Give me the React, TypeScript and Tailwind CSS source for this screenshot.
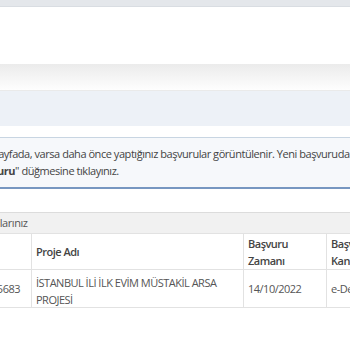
export default function App() {
  return (
    <div
      className="w-[350px] h-[350px] overflow-hidden bg-white text-[#555]"
      style={{ fontFamily: '"Open Sans", "Noto Sans", sans-serif' }}
    >
      <div className="h-[7px] bg-[#e4e7eb] border-b border-[#d9dde2]" />
      <div className="h-[57px] bg-white" />
      <div className="h-[27px] bg-gradient-to-b from-[#ebebeb] to-[#fefefe] border-b border-[#eaeaea]" />
      <div className="h-[35px] bg-[#edf1f7]" />
      <div className="h-[11px]" />

      <div className="h-[52px] border-t border-[#c8d5e2] border-b-2 border-b-[#7797c1] bg-[#f6f8fb] pt-[7px] text-[11px] leading-[17px] tracking-[-0.45px] text-[#444] whitespace-nowrap">
        <div className="-ml-[22px]">
          Bu sayfada, varsa daha önce yaptığınız başvurular görüntülenir. Yeni başvuruda bulunmak için <b>"Yeni</b>
        </div>
        <div className="-ml-[27px]">
          <b>Başvuru</b>" düğmesine tıklayınız.
        </div>
      </div>

      <div className="h-[23px]" />

      <div className="border-t border-[#dcdcdc] bg-[#f1f1f1] h-[21px] flex items-center text-[11px] tracking-[-0.45px] text-[#555] whitespace-nowrap">
        <span className="-ml-[39px]">Başvurularınız</span>
      </div>

      <div className="-ml-[40px] w-[450px] text-[11px] leading-[17px] tracking-[-0.5px]">
        <div className="flex h-[37px] border-t border-b border-[#e2e2e2] font-semibold text-[#444]">
          <div className="w-[72px] border-r border-[#e2e2e2]" />
          <div className="w-[212px] border-r border-[#e2e2e2] px-[4px] flex items-center">Proje Adı</div>
          <div className="w-[83px] border-r border-[#e2e2e2] px-[4px] pt-[1px]">
            Başvuru
            <br />
            Zamanı
          </div>
          <div className="w-[83px] px-[4px] pt-[1px] whitespace-nowrap">
            Başvuru
            <br />
            Kanalı
          </div>
        </div>
        <div className="flex h-[38px] border-b border-[#e2e2e2] text-[#555]">
          <div className="w-[72px] border-r border-[#e2e2e2] pr-[11px] flex items-center justify-end">25683</div>
          <div className="w-[212px] border-r border-[#e2e2e2] px-[4px] pt-[4px]">
            İSTANBUL İLİ İLK EVİM MÜSTAKİL ARSA
            <br />
            PROJESİ
          </div>
          <div className="w-[83px] border-r border-[#e2e2e2] px-[4px] flex items-center">14/10/2022</div>
          <div className="w-[83px] px-[4px] flex items-center whitespace-nowrap">e-Devlet</div>
        </div>
      </div>
    </div>
  );
}
